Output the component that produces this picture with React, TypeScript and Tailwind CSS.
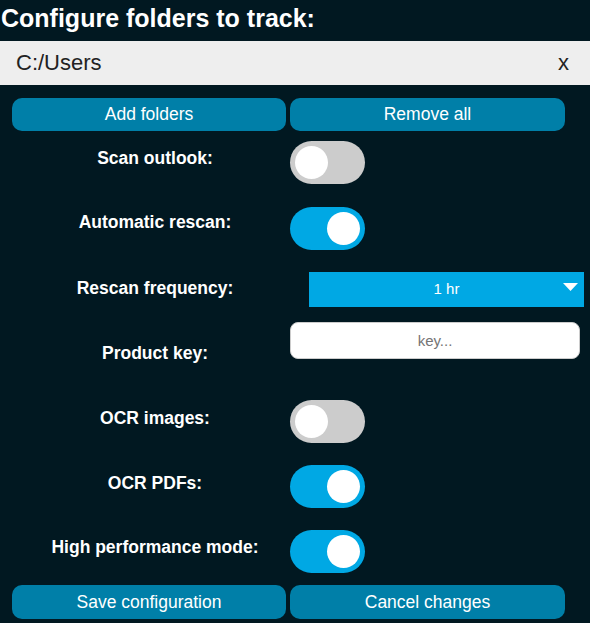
import { FunctionComponent, ReactNode } from "react";

interface IToggle {
    on: boolean
}

const Toggle: FunctionComponent<IToggle> = ({ on }) => {
    return (
        <div className={`w-[75px] h-[43px] rounded-full p-[5px] flex ${on ? "bg-[#00a8e4] justify-end" : "bg-[#cccccc] justify-start"}`}>
            <span className="w-[33px] h-[33px] rounded-full bg-white" />
        </div>
    )
}

interface IRow {
    label: string
    labelClass?: string
    className?: string
    children: ReactNode
}

const Row: FunctionComponent<IRow> = ({ label, labelClass = "", className = "", children }) => {
    return (
        <div className={`flex flex-row ${className}`}>
            <span className={`w-[290px] pl-[20px] text-center font-bold text-[17.5px] ${labelClass}`}>{label}</span>
            {children}
        </div>
    )
}

const App: FunctionComponent = () => {
    return (
        <div className="w-[590px] h-[623px] bg-[#011821] text-white font-['Liberation_Sans',Arial,sans-serif] overflow-hidden">
            <h1 className="h-[41px] text-[25px] font-bold leading-[36px] pl-[1px]">Configure folders to track:</h1>

            <div className="h-[44px] bg-[#eeeeee] text-[#222222] text-[22px] flex flex-row items-center justify-between pl-[16px] pr-[21px] pb-[2px]">
                <span>C:/Users</span>
                <span>x</span>
            </div>

            <div className="flex flex-row gap-[4px] px-[12px] mt-[13px]">
                <button className="w-[274px] h-[33px] rounded-[10px] bg-[#007fa8] text-[17.5px]">Add folders</button>
                <button className="w-[275px] h-[33px] rounded-[10px] bg-[#007fa8] text-[17.5px]">Remove all</button>
            </div>

            <Row label="Scan outlook:" labelClass="self-center pb-[9px]" className="mt-[10px]">
                <Toggle on={false} />
            </Row>

            <Row label="Automatic rescan:" labelClass="self-center pb-[12px]" className="mt-[23px]">
                <Toggle on={true} />
            </Row>

            <Row label="Rescan frequency:" labelClass="self-center pb-[2px]" className="mt-[22px]">
                <div className="relative ml-[19px] w-[275px] h-[35px] bg-[#00a8e4] flex items-center justify-center text-[15px]">
                    <span>1 hr</span>
                    <svg className="absolute right-[6px] top-[11px]" width="15" height="8" viewBox="0 0 15 8">
                        <path d="M0 0 L15 0 L7.5 8 Z" fill="#ffffff" />
                    </svg>
                </div>
            </Row>

            <Row label="Product key:" labelClass="pt-[21px] h-[37px] leading-[20px]" className="mt-[15px] h-[37px]">
                <input
                    className="w-[290px] h-[37px] rounded-[8px] border border-[#cccccc] bg-white text-center text-[15px] text-black placeholder:text-[#757575] outline-none"
                    placeholder="key..."
                />
            </Row>

            <Row label="OCR images:" labelClass="self-center pb-[7px]" className="mt-[41px]">
                <Toggle on={false} />
            </Row>

            <Row label="OCR PDFs:" labelClass="self-center pb-[6px]" className="mt-[22px]">
                <Toggle on={true} />
            </Row>

            <Row label="High performance mode:" labelClass="self-center pb-[9px]" className="mt-[22px]">
                <Toggle on={true} />
            </Row>

            <div className="flex flex-row gap-[4px] px-[12px] mt-[12px]">
                <button className="w-[274px] h-[34px] rounded-[10px] bg-[#007fa8] text-[17.5px]">Save configuration</button>
                <button className="w-[275px] h-[34px] rounded-[10px] bg-[#007fa8] text-[17.5px]">Cancel changes</button>
            </div>
        </div>
    )
}

export default App;
